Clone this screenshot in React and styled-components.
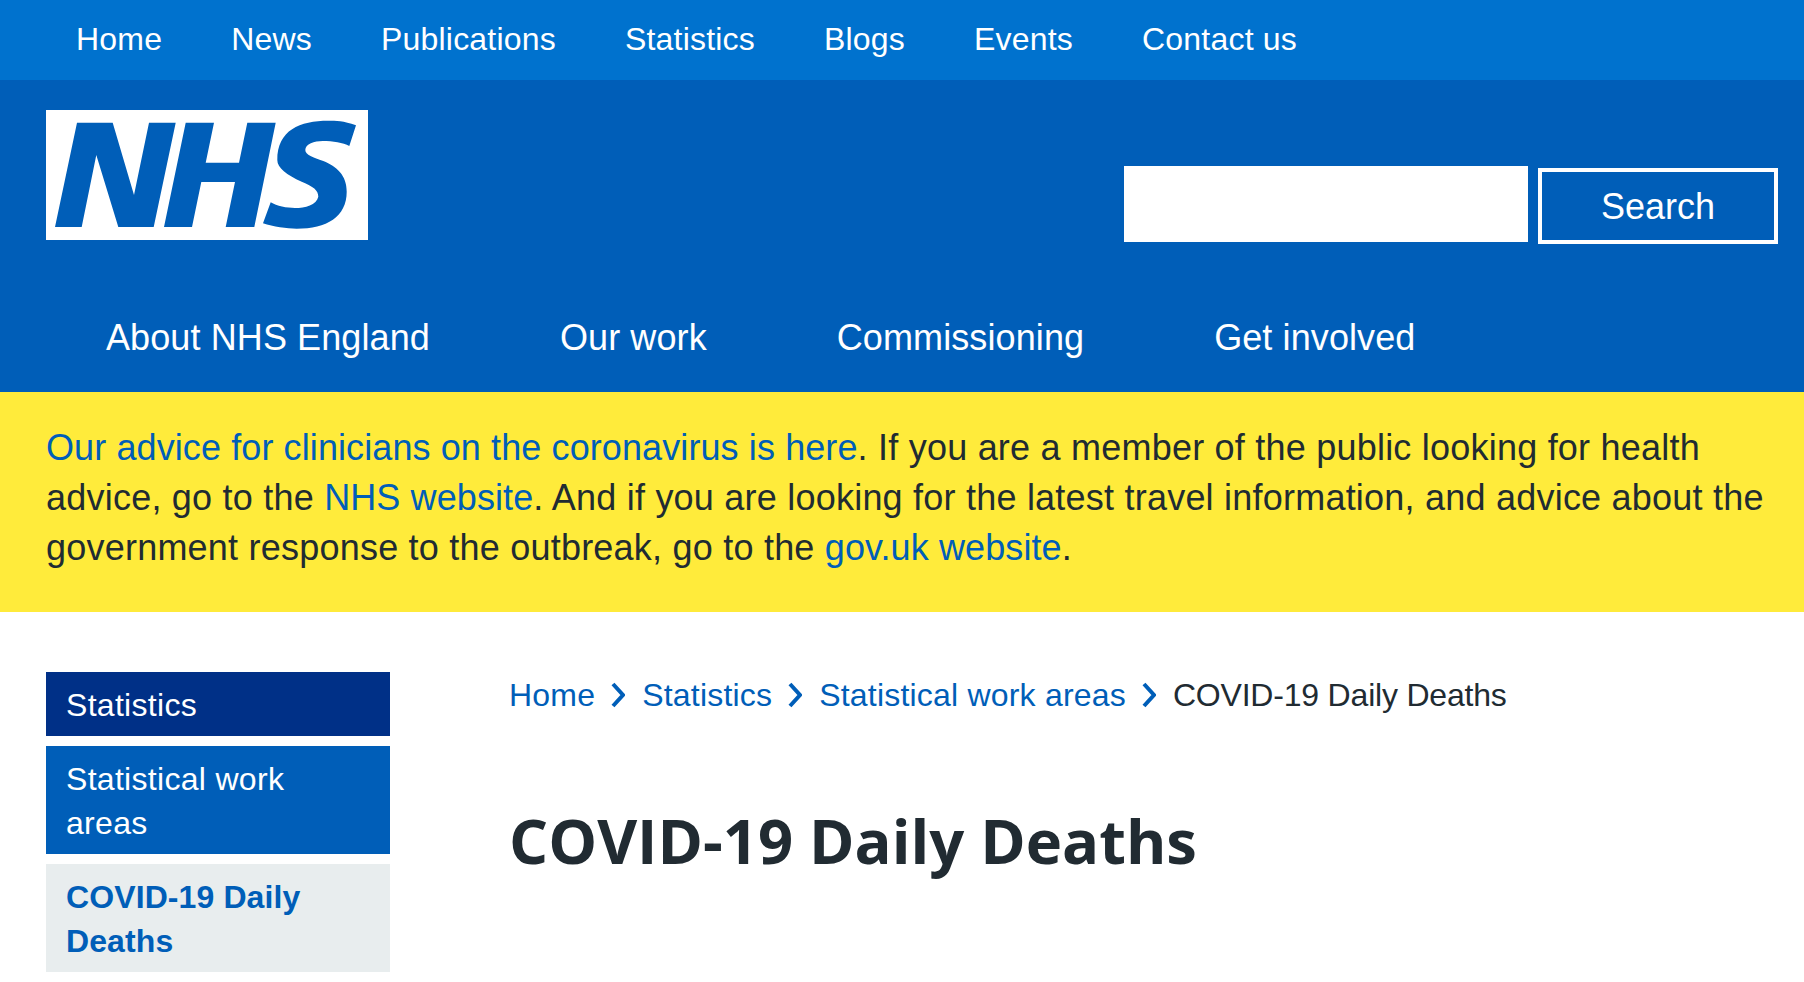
import React from 'react';
import styled, { createGlobalStyle } from 'styled-components';

const GlobalStyle = createGlobalStyle`
  html, body {
    margin: 0;
    padding: 0;
    height: 100%;
    overflow: hidden;
    background: #ffffff;
    font-family: "Liberation Sans", Arial, sans-serif;
  }
  * { box-sizing: border-box; }
`;

const TopBar = styled.nav`
  height: 80px;
  background: #0072ce;
  display: flex;
  align-items: center;
  padding: 0 0 2px 76px;
  gap: 69px;
`;

const TopLink = styled.a`
  color: #ffffff;
  font-size: 32px;
  letter-spacing: 0.2px;
  line-height: 40px;
  white-space: nowrap;
`;

const Header = styled.header`
  height: 312px;
  background: #005eb8;
  padding: 30px 26px 0 46px;
`;

const HeaderRow = styled.div`
  display: flex;
  justify-content: space-between;
  align-items: flex-start;
`;

const Logo = styled.svg`
  display: block;
  width: 322px;
  height: 130px;
`;

const SearchForm = styled.form`
  display: flex;
  align-items: flex-start;
  gap: 10px;
  margin-top: 56px;
`;

const SearchInput = styled.input`
  width: 404px;
  height: 76px;
  border: 0;
  background: #ffffff;
  padding: 0 12px;
`;

const SearchButton = styled.button`
  width: 240px;
  height: 76px;
  margin-top: 2px;
  padding: 1px 0 0;
  background: #005eb8;
  border: 4px solid #ffffff;
  color: #ffffff;
  font: inherit;
  font-size: 36px;
  line-height: 36px;
`;

const MainNav = styled.nav`
  display: flex;
  gap: 130px;
  padding-left: 60px;
  margin-top: 64px;
`;

const MainLink = styled.a`
  color: #ffffff;
  font-size: 36px;
  letter-spacing: 0.1px;
  line-height: 60px;
  white-space: nowrap;
`;

const Notice = styled.section`
  height: 220px;
  background: #ffeb3b;
  padding: 31px 30px 0 46px;
  color: #212b32;
  font-size: 36px;
  letter-spacing: 0.22px;
  line-height: 50px;
`;

const NoticeLink = styled.a`
  color: #005eb8;
  letter-spacing: 0.1px;
`;

const Body = styled.div`
  display: flex;
  padding: 60px 0 0 46px;
`;

const SideNav = styled.aside`
  width: 344px;
  display: flex;
  flex-direction: column;
  gap: 10px;
  flex-shrink: 0;
`;

const SideItem = styled.a`
  display: block;
  padding: 11px 64px 9px 20px;
  font-size: 32px;
  letter-spacing: ${(props) => (props.$current ? '0.1px' : '0.3px')};
  line-height: 44px;
  background: ${(props) => props.$bg};
  color: ${(props) => props.$color || '#ffffff'};
  font-weight: ${(props) => (props.$current ? 700 : 400)};
`;

const Content = styled.main`
  margin-left: 119px;
`;

const Breadcrumb = styled.ol`
  display: flex;
  align-items: center;
  list-style: none;
  margin: 0;
  padding: 0;
  font-size: 32px;
  line-height: 46px;
`;

const Crumb = styled.li`
  display: flex;
  align-items: center;
  color: #212b32;
  letter-spacing: -0.2px;
`;

const CrumbLink = styled.a`
  color: #005eb8;
  letter-spacing: 0.2px;
`;

const Chevron = styled.svg`
  width: 14px;
  height: 26px;
  margin: 0 17px 0 16px;
  fill: none;
  stroke: #005eb8;
  stroke-width: 4;
`;

const Title = styled.h1`
  margin: 79px 0 0;
  font-family: "Open Sans", "Noto Sans", sans-serif;
  font-weight: 700;
  font-size: 61.5px;
  line-height: 86px;
  color: #212b32;
`;

const crumbs = ['Home', 'Statistics', 'Statistical work areas'];
const topLinks = ['Home', 'News', 'Publications', 'Statistics', 'Blogs', 'Events', 'Contact us'];
const mainLinks = ['About NHS England', 'Our work', 'Commissioning', 'Get involved'];

const NhsLogo = () => (
  <Logo viewBox="0 0 322 130" role="img" aria-label="NHS">
    <rect width="322" height="130" fill="#ffffff" />
    <path
      fill="#005eb8"
      d="M31 12.7H66.7L88 85 103 12.7H129.7L107.7 117H72.3L50.3 45 35.7 117H9Z
         M139.7 12.7H168L159.7 52.7H193L201.3 12.7H229.7L208.3 117H179.7L189 72H155.3L146 117H118Z
         M310 15.3C297.3 10.7 290 10.7 282.3 10.7C254 10.7 231.3 20 231.3 50C231.3 58 240.7 65 255.7 71.7
         C267.3 76.7 272.3 80 272.3 86.7C270.7 95 259 98 249 98C240.7 98 230.7 96 224.7 92.3L217 113.3
         C227.3 116.7 240.7 118.7 250.7 118.7C280.7 118.7 300.7 106.7 300.7 81.7C300.7 65 290.7 56.7 277.3 51
         C267.3 47.3 259.3 45 259.3 40C259.3 34 268.3 31 276.7 31C287 31 297 32.7 303.3 36Z"
    />
  </Logo>
);

export default function App() {
  return (
    <>
      <GlobalStyle />
      <TopBar>
        {topLinks.map((link) => (
          <TopLink key={link}>{link}</TopLink>
        ))}
      </TopBar>
      <Header>
        <HeaderRow>
          <NhsLogo />
          <SearchForm>
            <SearchInput aria-label="Search" />
            <SearchButton type="button">Search</SearchButton>
          </SearchForm>
        </HeaderRow>
        <MainNav>
          {mainLinks.map((link) => (
            <MainLink key={link}>{link}</MainLink>
          ))}
        </MainNav>
      </Header>
      <Notice>
        <NoticeLink>Our advice for clinicians on the coronavirus is here</NoticeLink>. If you are a member of the public looking for health
        advice, go to the <NoticeLink>NHS website</NoticeLink>. And if you are looking for the latest travel information, and advice about the
        government response to the outbreak, go to the <NoticeLink>gov.uk website</NoticeLink>.
      </Notice>
      <Body>
        <SideNav>
          <SideItem $bg="#003087">Statistics</SideItem>
          <SideItem $bg="#005eb8">Statistical work areas</SideItem>
          <SideItem $bg="#e8edee" $color="#005eb8" $current>COVID-19 Daily Deaths</SideItem>
        </SideNav>
        <Content>
          <Breadcrumb>
            {crumbs.map((crumb) => (
              <Crumb key={crumb}>
                <CrumbLink>{crumb}</CrumbLink>
                <Chevron viewBox="0 0 14 26">
                  <path d="M2 2 L12 13 L2 24" />
                </Chevron>
              </Crumb>
            ))}
            <Crumb>COVID-19 Daily Deaths</Crumb>
          </Breadcrumb>
          <Title>COVID-19 Daily Deaths</Title>
        </Content>
      </Body>
    </>
  );
}
